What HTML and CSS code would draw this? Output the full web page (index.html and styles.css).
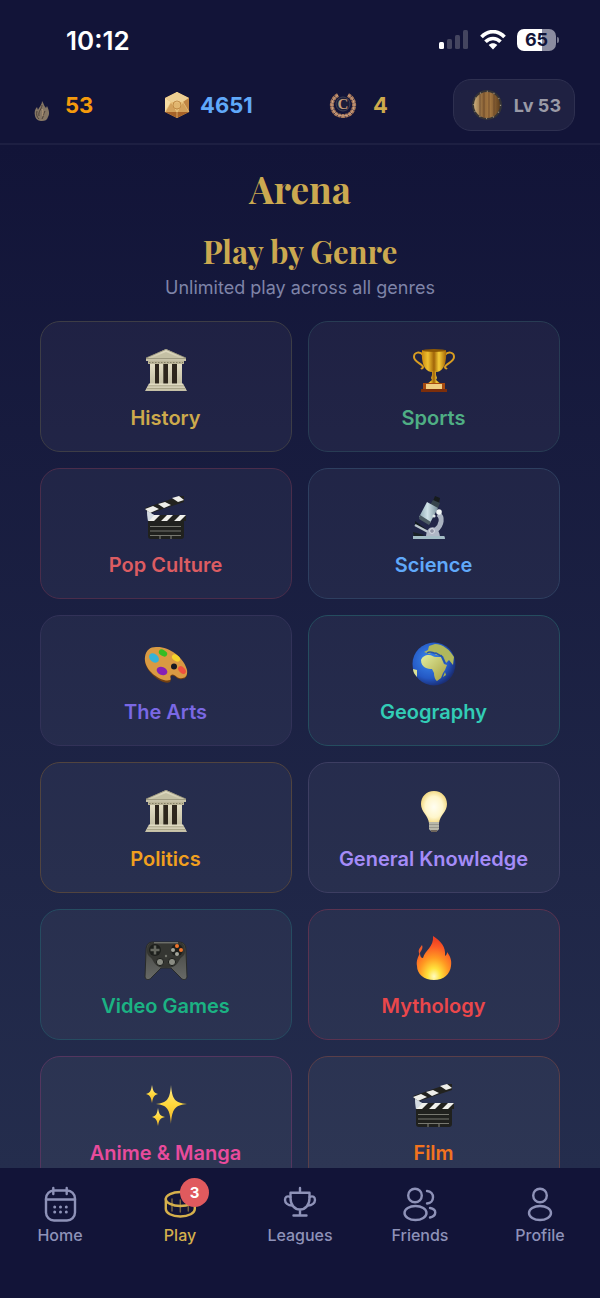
FILE: index.html
```html
<!DOCTYPE html>
<html lang="en">
<head>
    <meta charset="UTF-8">
    <meta name="viewport" content="width=device-width, initial-scale=1.0">
    <title>Arena</title>
    <link rel="stylesheet" href="styles.css">
</head>
<body>
    <!-- shared drawings -->
    <svg class="defs" aria-hidden="true">
        <defs>
            <linearGradient id="stone" x1="0" y1="0" x2="0" y2="1">
                <stop offset="0" stop-color="#e4dfc6"/><stop offset="1" stop-color="#c3bea4"/>
            </linearGradient>
            <linearGradient id="gold" x1="0" y1="0" x2="1" y2="0">
                <stop offset="0" stop-color="#c98a10"/><stop offset=".25" stop-color="#f0c030"/>
                <stop offset=".5" stop-color="#a06408"/><stop offset=".7" stop-color="#f5cc38"/><stop offset="1" stop-color="#a66606"/>
            </linearGradient>
            <linearGradient id="steel" x1="0" y1="0" x2="1" y2="0">
                <stop offset="0" stop-color="#8da8b3"/><stop offset=".45" stop-color="#cfe2e8"/><stop offset="1" stop-color="#78909a"/>
            </linearGradient>
            <radialGradient id="ocean" cx=".4" cy=".4" r=".62">
                <stop offset="0" stop-color="#3b8af0"/><stop offset=".7" stop-color="#2458c4"/><stop offset="1" stop-color="#1a2f78"/>
            </radialGradient>
            <linearGradient id="land" x1="0" y1="0" x2="1" y2="1">
                <stop offset="0" stop-color="#e3eea0"/><stop offset="1" stop-color="#a39d3c"/>
            </linearGradient>
            <radialGradient id="bulb" cx=".5" cy=".5" r=".55">
                <stop offset="0" stop-color="#fffef2"/><stop offset=".6" stop-color="#fff6cb"/><stop offset="1" stop-color="#f0d376"/>
            </radialGradient>
            <radialGradient id="fire" cx=".5" cy=".92" r=".85">
                <stop offset="0" stop-color="#fffbc0"/><stop offset=".22" stop-color="#ffe23c"/>
                <stop offset=".5" stop-color="#ff9a22"/><stop offset=".8" stop-color="#fb5a26"/><stop offset="1" stop-color="#ee3f22"/>
            </radialGradient>
            <linearGradient id="wood" x1="0" y1="0" x2="1" y2="0">
                <stop offset="0" stop-color="#d0b583"/><stop offset=".35" stop-color="#8d6538"/><stop offset=".6" stop-color="#a67942"/><stop offset="1" stop-color="#553719"/>
            </linearGradient>
            <linearGradient id="pad" x1="0" y1="0" x2="0" y2="1">
                <stop offset="0" stop-color="#42433f"/><stop offset="1" stop-color="#686a67"/>
            </linearGradient>
            <linearGradient id="star" x1="0" y1="0" x2="0" y2="1">
                <stop offset="0" stop-color="#ffe98a"/><stop offset=".5" stop-color="#ffd83c"/><stop offset="1" stop-color="#f0b429"/>
            </linearGradient>
        </defs>
        <symbol id="temple" viewBox="0 0 44 44">
            <path d="M6 14h32v23H6z" fill="#605b4b"/>
            <path d="M11 16h5v20h-5zM20 16h4v20h-4zM28 16h5v20h-5z" fill="#2d261d"/>
            <path d="M6 15h5v21H6zM15 15h4v21h-4zM24 15h4v21h-4zM33 15h5v21h-5z" fill="url(#stone)"/>
            <path d="M22 1 42 10v3H2v-3z" fill="url(#stone)"/>
            <path d="M22 4 36 10H8z" fill="#c4c0a4"/>
            <path d="M2 10.500h40M22 1.500 2 10M22 1.500 42 10" stroke="#918d74" stroke-width=".8" fill="none"/>
            <path d="M4 13h36v3H4z" fill="#bbb598"/>
            <path d="M5 14.500h34" stroke="#858066" stroke-dasharray="1.500 1.500"/>
            <path d="M5 35.500h34l4 7.500H1z" fill="url(#stone)"/>
            <path d="M4 37.800h36M2.500 40.500h39" stroke="#a09b7e" stroke-width=".8"/>
        </symbol>
        <symbol id="trophy" viewBox="0 0 44 44">
            <g fill="none" stroke="#d99d21" stroke-width="2">
                <path d="M11 7C8 3 2 4 2 9c0 5 9 7 9 10 0 1-1 2-2 1"/>
                <path d="M33 7c3-4 9-3 9 2 0 5-9 7-9 10 0 1 1 2 2 1"/>
            </g>
            <path d="M10 2h24c1 12-2 21-9 22h-6C12 23 9 14 10 2z" fill="url(#gold)"/>
            <ellipse cx="22" cy="2.500" rx="12" ry="1.500" fill="#8d5905"/>
            <path d="M20 23h4v4l1 3-1 2 5 4H15l5-4-1-2 1-3z" fill="url(#gold)"/>
            <path d="M11 35h22v6H11z" fill="#a64a10"/>
            <path d="M14 36h16v5H14z" fill="#efcf83"/>
            <path d="M9 41h26v3H9z" fill="#7c2e0b"/>
        </symbol>
        <symbol id="clapper" viewBox="0 0 44 44">
            <path d="m1 13 35-12 4 0v6L4 19z" fill="#22221f"/>
            <path d="m1 14 8-3 6 3-9 4zM14 9l7-2 6 3-7 3zM28 3l7-2 5 4-6 2z" fill="#eeeeea"/>
            <path d="m3 16 7 4 3 4-9 2z" fill="#d4dbe2"/>
            <circle cx="7" cy="20" r="1.200" fill="#69727a"/>
            <path d="M12 20h30v6H4z" fill="#22221f"/>
            <path d="m4 26 6-6h6l-6 6zM17 26l6-6h6l-6 6zM30 26l6-6h6l-6 6z" fill="#f0f0ec"/>
            <path d="m3 16 7 4-3 4-3 2z" fill="#d4dbe2"/>
            <path d="M4 26h36v15q0 3-3 3H7q-3 0-3-3z" fill="#20211e"/>
            <path d="M6 31.500h31M6 36h31M6 40.500h31" stroke="#777870" stroke-width="1.100"/>
            <path d="M16 41v3M27 41v3" stroke="#86877f"/>
        </symbol>
        <symbol id="microscope" viewBox="0 0 44 44">
            <path d="M26 19c5 3 4 11-2 16" fill="none" stroke="#aab3c1" stroke-width="5"/>
            <path d="m23 1 5 2-1 5-6-2z" fill="#161b1c"/>
            <path d="m21 5 7 3-2 5-8-3z" fill="#35434b"/>
            <path d="m15 7 11 6-8 15-11-6z" fill="url(#steel)"/>
            <path d="m8 20 11 7-2 3-10-6z" fill="#4c5b63"/>
            <path d="m3 26 11 8-2 2-9-6z" fill="#121b1d"/>
            <path d="m3 30 15 8" stroke="#bcc7ce" stroke-width="2.500"/>
            <path d="m1 37 11 3-2 2H2z" fill="#1a2225"/>
            <path d="M14 42c0-13 13-13 14 0z" fill="#b0b7c6"/>
            <circle cx="20" cy="36" r="2.400" fill="#8e91a3" stroke="#dbe0e8"/>
            <path d="M1 41h31q1 0 1 3H1z" fill="#a3bcc5"/>
            <circle cx="27" cy="17" r="2.800" fill="#f0f5f5"/><circle cx="22" cy="21" r="1.600" fill="#dfe8ea"/>
        </symbol>
        <symbol id="palette" viewBox="0 0 44 44">
            <path d="M12 6C24 5 40 16 43 29c1 7-3 9-8 8-3-1-5-5-8-3-2 2 1 4-1 6C19 44-1 29 1 16 2 9 6 6 12 6z" fill="#744010"/>
            <path d="M12 5C24 4 40 15 43 28c1 7-3 9-8 8-3-1-5-5-8-3-2 2 1 4-1 5C18 41-1 28 1 15 2 8 6 5 12 5z" fill="#d99a43"/>
            <ellipse cx="10" cy="16" rx="5.500" ry="4" transform="rotate(40 10 16)" fill="#35b3d8"/>
            <ellipse cx="19" cy="11" rx="4.500" ry="3" transform="rotate(30 19 11)" fill="#35bd23"/>
            <ellipse cx="32" cy="16" rx="4.500" ry="3" transform="rotate(38 32 16)" fill="#f4d32b"/>
            <ellipse cx="18" cy="29" rx="5.500" ry="4" transform="rotate(20 18 29)" fill="#8620b6"/>
            <ellipse cx="38" cy="28" rx="4.500" ry="3" transform="rotate(45 38 28)" fill="#f0503f"/>
            <circle cx="30" cy="24.500" r="3" fill="#171a23"/>
        </symbol>
        <symbol id="globe" viewBox="0 0 44 44">
            <circle cx="22" cy="22" r="21.500" fill="url(#ocean)"/>
            <path d="M9 18c1-3 4-5 8-5 3 0 4 2 7 2l5 0 3 7 3 1-2 5-2 3-2 5-4 3c-2-1-3-5-3-8l-2-4c-4 0-11-1-11-9z" fill="url(#land)"/>
            <path d="m12 10 4-2 1-4 6-2c8 0 15 6 19 13l-1 8-4-5-3 3-3-7-7-1-3-3-4 2z" fill="#b0b85c"/>
            <path d="M15 11c4-3 6 1 9 0l5 3M29 13l4 8" stroke="#2755a9" stroke-width="1.500" fill="none"/>
            <path d="M1 27l4 1v7c-2-2-4-5-4-8z" fill="#dce296"/>
            <path d="m33 30 1 3-3 2z" fill="#afb44a"/>
        </symbol>
        <symbol id="lightbulb" viewBox="0 0 44 44">
            <path d="M22 2c8 0 13 6 13 13 0 8-7 11-8 19H17C16 26 9 23 9 15 9 8 14 2 22 2z" fill="url(#bulb)"/>
            <path d="M17 33h10v7c-1 3-9 3-10 0z" fill="#b8b8aa"/>
            <path d="M17 35.500h10M17 38.500h10" stroke="#98988d"/>
            <path d="M19 42h6" stroke="#6e655b" stroke-width="2"/>
        </symbol>
        <symbol id="gamepad" viewBox="0 0 44 44">
            <path d="M9 6h26c5 0 7 3 7 9l1 26c-1 4-5 3-7 0l-9-9H17l-9 9c-2 3-6 4-7 0l1-26c0-6 2-9 7-9z" fill="url(#pad)" stroke="#292b2a"/>
            <path d="M10 6h24c5 0 7 4 7 9 0 5-3 5-5 8-3 6-6 9-14 9S11 29 8 23c-2-3-5-3-5-8s2-9 7-9z" fill="#353632"/>
            <path d="M10 6.800h24" stroke="#85867f"/>
            <circle cx="11" cy="14" r="6" fill="#1d1f1c"/><circle cx="33" cy="14" r="6" fill="#1d1f1c"/>
            <path d="M11 9.500v9M6.500 14h9" stroke="#666860" stroke-width="2.500"/>
            <circle cx="33" cy="10" r="2" fill="#f0742c"/><circle cx="37" cy="14" r="2" fill="#f0742c"/>
            <circle cx="29" cy="14" r="2" fill="#a3a59b"/><circle cx="33" cy="18" r="2" fill="#a3a59b"/>
            <circle cx="16" cy="26" r="3.600" fill="#898b82" stroke="#1d1f1c"/><circle cx="28" cy="26" r="3.600" fill="#898b82" stroke="#1d1f1c"/>
            <circle cx="22" cy="20" r="1.200" fill="#74766e"/>
        </symbol>
        <symbol id="flame" viewBox="0 0 44 44">
            <path d="M21 0c8 5 13 11 12 20 2-1 2-3 2-4 3 4 5 8 4 14-1 8-7 14-17 14S5 38 5 30c-1-5 1-9 3-13 0 3 1 5 3 5 2-8 11-11 10-22z" fill="url(#fire)"/>
            <path d="M10 9c2 5-3 6-2 10-3-5 0-7 2-10z" fill="#ee5b2d"/>
        </symbol>
        <symbol id="sparkles" viewBox="0 0 44 44">
            <g fill="url(#star)">
                <path d="M27 2c1 14 4 18 16 19-12 1-15 5-16 20-1-15-4-19-15-20C23 20 26 16 27 2z"/>
                <path d="M8 2c1 6 2 8 6 9-4 1-5 3-6 9-1-6-2-8-6-9 4-1 5-3 6-9z"/>
                <path d="M14 25c1 6 2 8 7 9-5 1-6 3-7 9-1-6-2-8-6-9 4-1 5-3 6-9z"/>
            </g>
        </symbol>
    </svg>

    <header class="header">
        <div class="status_bar">
            <span class="time">10:12</span>
            <div class="status_icons">
                <svg width="30" height="20" viewBox="0 0 30 20" aria-hidden="true">
                    <rect x="0" y="12" width="5" height="7" rx="1.500" fill="#fff"/>
                    <g fill="#44455f">
                        <rect x="8" y="9" width="5" height="10" rx="1.500"/>
                        <rect x="16" y="5" width="5" height="14" rx="1.500"/>
                        <rect x="24" y="0" width="5" height="19" rx="1.500"/>
                    </g>
                </svg>
                <svg width="26" height="20" viewBox="0 0 26 20" aria-hidden="true">
                    <g fill="none" stroke="#fff" stroke-width="3.600">
                        <path d="M1.500 7C8-.2 18-.2 24.500 7"/>
                        <path d="M5.500 11.800c4.200-4.400 10.800-4.400 15 0"/>
                    </g>
                    <path d="M8.700 15c2.500-2.200 6.100-2.200 8.600 0L13 19.500z" fill="#fff"/>
                </svg>
                <span class="battery">65</span>
            </div>
        </div>
        <div class="stats">
            <div class="stat streak">
                <svg width="30" height="36" viewBox="0 0 30 36" aria-hidden="true">
                    <path d="M17 14c2 3 2 5 4 7l1-2c2 4 3 8 1 11-1 3-3 4-6 4s-6-1-7-5c-1-4 0-7 2-9l1 3c1-3 4-5 4-9z" fill="#857664"/>
                    <path d="M17 18c0 4-4 6-3 11M20 24c-2 3-1 5-3 8M12 24c-1 4 0 6 2 8" fill="none" stroke="#4c4039"/>
                    <path d="M17 22c2 2 0 5 1 7" fill="none" stroke="#b69b79"/>
                </svg>
                <span>53</span>
            </div>
            <div class="stat gems">
                <svg width="26" height="28" viewBox="0 0 26 28" aria-hidden="true">
                    <path d="m13 1 12 6v14l-12 6-12-6V7z" fill="#d3a15b"/>
                    <path d="m13 1 12 6-6 4H7L1 7z" fill="#edcf94"/>
                    <path d="m7 11 12 0-6 10z" fill="#e1b66f"/>
                    <path d="m1 7 6 4-6 10z" fill="#f7dda4"/>
                    <path d="m25 7-6 4 6 10z" fill="#c08544"/>
                    <path d="m1 21 12 0 12 0-12 6z" fill="#a66228"/>
                    <path d="m1 21 6-10 6 10 6-10 6 10M7 11h12M13 1 7 11M13 1l6 10M13 21v6" fill="none" stroke="#f0d08c" stroke-width=".6"/>
                    <circle cx="13" cy="14" r="4" fill="none" stroke="#b77f3a" stroke-width=".8"/>
                </svg>
                <span>4651</span>
            </div>
            <div class="stat coins">
                <svg width="34" height="28" viewBox="0 0 34 28" aria-hidden="true">
                    <path d="M9 4C2 8 1 16 6 22q3 3 8 3M19 4c7 4 8 12 3 18q-3 3-8 3" fill="none" stroke="#a9795b" stroke-width="4" stroke-dasharray="3 .5"/>
                    <path d="M9 4C2 8 1 16 6 22q3 3 8 3M19 4c7 4 8 12 3 18q-3 3-8 3" fill="none" stroke="#d9b390" stroke-width=".8"/>
                    <circle cx="14" cy="13" r="7" fill="#1d1d39" stroke="#3d4054"/>
                    <text x="14" y="18" class="coin_letter">C</text>
                </svg>
                <span>4</span>
            </div>
            <button type="button" class="level">
                <svg width="30" height="30" viewBox="0 0 30 30" aria-hidden="true">
                    <circle cx="15" cy="15" r="14" fill="url(#wood)" stroke="#343336" stroke-width="2"/>
                    <path d="M8 3v24M12 2v26M17 2v26M22 3v24" stroke="#65452a" stroke-width=".8"/>
                    <circle cx="15" cy="15" r="13.500" fill="none" stroke="#99917c" stroke-width="1.300" stroke-dasharray="1 6"/>
                </svg>
                <span>Lv 53</span>
            </button>
        </div>
    </header>

    <main class="content">
        <h1>Arena</h1>
        <h2>Play by Genre</h2>
        <p class="subtitle">Unlimited play across all genres</p>
        <div class="genres">
            <button type="button" class="genre history"><svg aria-hidden="true"><use href="#temple"/></svg>History</button>
            <button type="button" class="genre sports"><svg aria-hidden="true"><use href="#trophy"/></svg>Sports</button>
            <button type="button" class="genre pop"><svg aria-hidden="true"><use href="#clapper"/></svg>Pop Culture</button>
            <button type="button" class="genre science"><svg aria-hidden="true"><use href="#microscope"/></svg>Science</button>
            <button type="button" class="genre arts"><svg aria-hidden="true"><use href="#palette"/></svg>The Arts</button>
            <button type="button" class="genre geography"><svg aria-hidden="true"><use href="#globe"/></svg>Geography</button>
            <button type="button" class="genre politics"><svg aria-hidden="true"><use href="#temple"/></svg>Politics</button>
            <button type="button" class="genre general"><svg aria-hidden="true"><use href="#lightbulb"/></svg>General Knowledge</button>
            <button type="button" class="genre games"><svg aria-hidden="true"><use href="#gamepad"/></svg>Video Games</button>
            <button type="button" class="genre mythology"><svg aria-hidden="true"><use href="#flame"/></svg>Mythology</button>
            <button type="button" class="genre anime"><svg aria-hidden="true"><use href="#sparkles"/></svg>Anime &amp; Manga</button>
            <button type="button" class="genre film"><svg aria-hidden="true"><use href="#clapper"/></svg>Film</button>
        </div>
    </main>

    <nav class="tabs">
        <a href="#home">
            <svg viewBox="0 0 36 36" aria-hidden="true">
                <rect x="4" y="4.500" width="29" height="30" rx="8"/>
                <path d="M11.300 2v6M24.700 2v6M4 13.500h29"/>
                <path class="dots" d="M12.700 21h0M18.500 21h0M24.300 21h0M12.700 26h0M18.500 26h0M24.300 26h0"/>
            </svg>
            Home
        </a>
        <a href="#play" class="active">
            <span class="tab_icon">
                <svg viewBox="0 0 36 36" aria-hidden="true">
                    <ellipse cx="18.300" cy="13" rx="14.500" ry="7"/>
                    <path d="M3.800 13v10c0 4 6 7.500 14.500 7.500S32.800 27 32.800 23V13"/>
                    <path class="ridges" d="M10 13v12M18.300 14v12M26.300 13v12"/>
                </svg>
                <span class="badge">3</span>
            </span>
            Play
        </a>
        <a href="#leagues">
            <svg viewBox="0 0 36 36" aria-hidden="true">
                <path d="M8.500 6.700h19V12c0 7-4 11.500-9.500 11.500S8.500 19 8.500 12zM18 2v4M18 23.500v6M11.500 29.500h13"/>
                <path d="M8.500 11C5 9.500 3 11 3 14s3 5.500 7 5.500M27.500 11c3.500-1.500 5.500 0 5.500 3s-3 5.500-7 5.500"/>
            </svg>
            Leagues
        </a>
        <a href="#friends">
            <svg viewBox="0 0 36 36" aria-hidden="true">
                <circle cx="13" cy="9.500" r="6.800"/><ellipse cx="13.500" cy="27" rx="11" ry="7"/>
                <path d="M25 5c8 .500 8 12 0 12.500M28 22c7 1 7 8 0 9.500"/>
            </svg>
            Friends
        </a>
        <a href="#profile">
            <svg viewBox="0 0 36 36" aria-hidden="true">
                <circle cx="18" cy="9.500" r="6.800"/><ellipse cx="18" cy="27" rx="11" ry="7"/>
            </svg>
            Profile
        </a>
    </nav>
</body>
</html>
```

FILE: styles.css
```css
*{
    margin: 0;
    padding: 0;
    box-sizing: border-box;
}
body{
    height: 100vh;
    display: flex;
    flex-direction: column;
    background: #121438;
    color: #8e92b8;
    font-family: Inter, "Liberation Sans", sans-serif;
    font-optical-sizing: none;
}
button{
    font-family: inherit;
    cursor: pointer;
}
.defs{
    position: absolute;
    width: 0;
    height: 0;
}

/* header */
.header{
    padding: 20px 25px 12px;
    border-bottom: 2px solid #1d1f42;
}
.status_bar{
    display: flex;
    justify-content: space-between;
    align-items: center;
    height: 40px;
    margin-bottom: 19px;
    padding: 0 19px 0 41px;
}
.time{
    font-size: 26px;
    font-weight: 600;
    color: #fff;
}
.status_icons{
    display: flex;
    align-items: center;
    gap: 11px;
}
.battery{
    position: relative;
    width: 39px;
    border-radius: 7px;
    background: linear-gradient(to right, #fff 65%, #8b8ca0 65%);
    color: #121438;
    font-size: 18px;
    line-height: 22px;
    font-weight: 700;
    text-align: center;
}
.battery::after{
    content: "";
    position: absolute;
    right: -3px;
    top: 8px;
    width: 2px;
    height: 6px;
    border-radius: 0 2px 2px 0;
    background: #77788f;
}
.stats{
    display: grid;
    grid-template-columns: 139fr 165fr 124fr 122fr;
    align-items: center;
}
.stat{
    display: flex;
    align-items: center;
    gap: 10px;
    font-size: 22px;
    font-weight: 700;
}
.streak{
    color: #f59a0c;
}
.gems{
    color: #60a9fa;
}
.coins{
    color: #cdaa4c;
}
.coin_letter{
    font: bold 15px "Liberation Serif", serif;
    fill: #c49c78;
    text-anchor: middle;
}
.level{
    display: flex;
    align-items: center;
    justify-content: flex-end;
    gap: 12px;
    height: 52px;
    padding-right: 13px;
    border: 1px solid #2e3050;
    border-radius: 18px;
    background: #1f2142;
    color: #9a9aa6;
    font-size: 18px;
    font-weight: 700;
    white-space: nowrap;
}

/* genres */
.content{
    flex: 1;
    min-height: 0;
    overflow: hidden auto;
    scrollbar-width: none;
    padding: 18px 40px;
    background: linear-gradient(#121438, #242d4d);
    text-align: center;
}
h1, h2{
    font-family: "Playfair Display", "Liberation Serif", serif;
    font-weight: 700;
    color: #cba950;
}
h1{
    font-size: 37px;
    line-height: 52px;
    margin-bottom: 16px;
}
h2{
    font-size: 31px;
    line-height: 40px;
}
.subtitle{
    margin: 4px 0 20px;
    font-size: 18px;
    line-height: 26px;
    color: #7f84a8;
}
.genres{
    display: grid;
    grid-template-columns: 1fr 1fr;
    gap: 16px;
}
.genre{
    display: flex;
    flex-direction: column;
    align-items: center;
    gap: 12px;
    padding: 26px 9px 19px 8px;
    border: 1px solid;
    border-radius: 20px;
    background: rgba(255, 255, 255, 0.045);
    font-size: 20px;
    line-height: 28px;
    font-weight: 600;
}
.genre svg{
    width: 44px;
    height: 44px;
}
.history{
    color: #cdaa4c;
    border-color: #3d3d46;
}
.sports{
    color: #4fae84;
    border-color: #283c54;
}
.pop{
    color: #dc5c62;
    border-color: #4a2d4b;
}
.science{
    color: #60a9fa;
    border-color: #2e3f60;
}
.arts{
    color: #7a68e4;
    border-color: #323258;
}
.geography{
    color: #32cdb6;
    border-color: #254d5f;
}
.politics{
    color: #f1a01e;
    border-color: #51443f;
}
.general{
    color: #a58cf8;
    border-color: #3d3e62;
}
.games{
    color: #1bb283;
    border-color: #264c61;
}
.mythology{
    color: #ea474b;
    border-color: #5a3350;
}
.anime{
    color: #e84b9c;
    border-color: #54365f;
}
.film{
    color: #f2731e;
    border-color: #5a3f49;
}

/* bottom tabs */
.tabs{
    display: grid;
    grid-template-columns: repeat(5, 1fr);
    height: 130px;
    padding-top: 18px;
    background: #121438;
}
.tabs a{
    display: flex;
    flex-direction: column;
    align-items: center;
    color: #8e92b8;
    font-size: 16px;
    line-height: 26px;
    font-weight: 500;
    text-decoration: none;
}
.tabs svg{
    display: block;
    width: 36px;
    height: 36px;
    fill: none;
    stroke: currentColor;
    stroke-width: 2.4;
    stroke-linecap: round;
    stroke-linejoin: round;
}
.tabs .dots{
    stroke-width: 3;
}
.tabs .ridges{
    stroke-width: 1.5;
    opacity: 0.5;
}
.tabs .active{
    color: #d5b04c;
}
.tab_icon{
    position: relative;
}
.badge{
    position: absolute;
    top: -8px;
    right: -11px;
    width: 29px;
    height: 29px;
    border-radius: 50%;
    background: #e05a5e;
    color: #fff;
    font-size: 15px;
    line-height: 29px;
    font-weight: 700;
    text-align: center;
}
```
